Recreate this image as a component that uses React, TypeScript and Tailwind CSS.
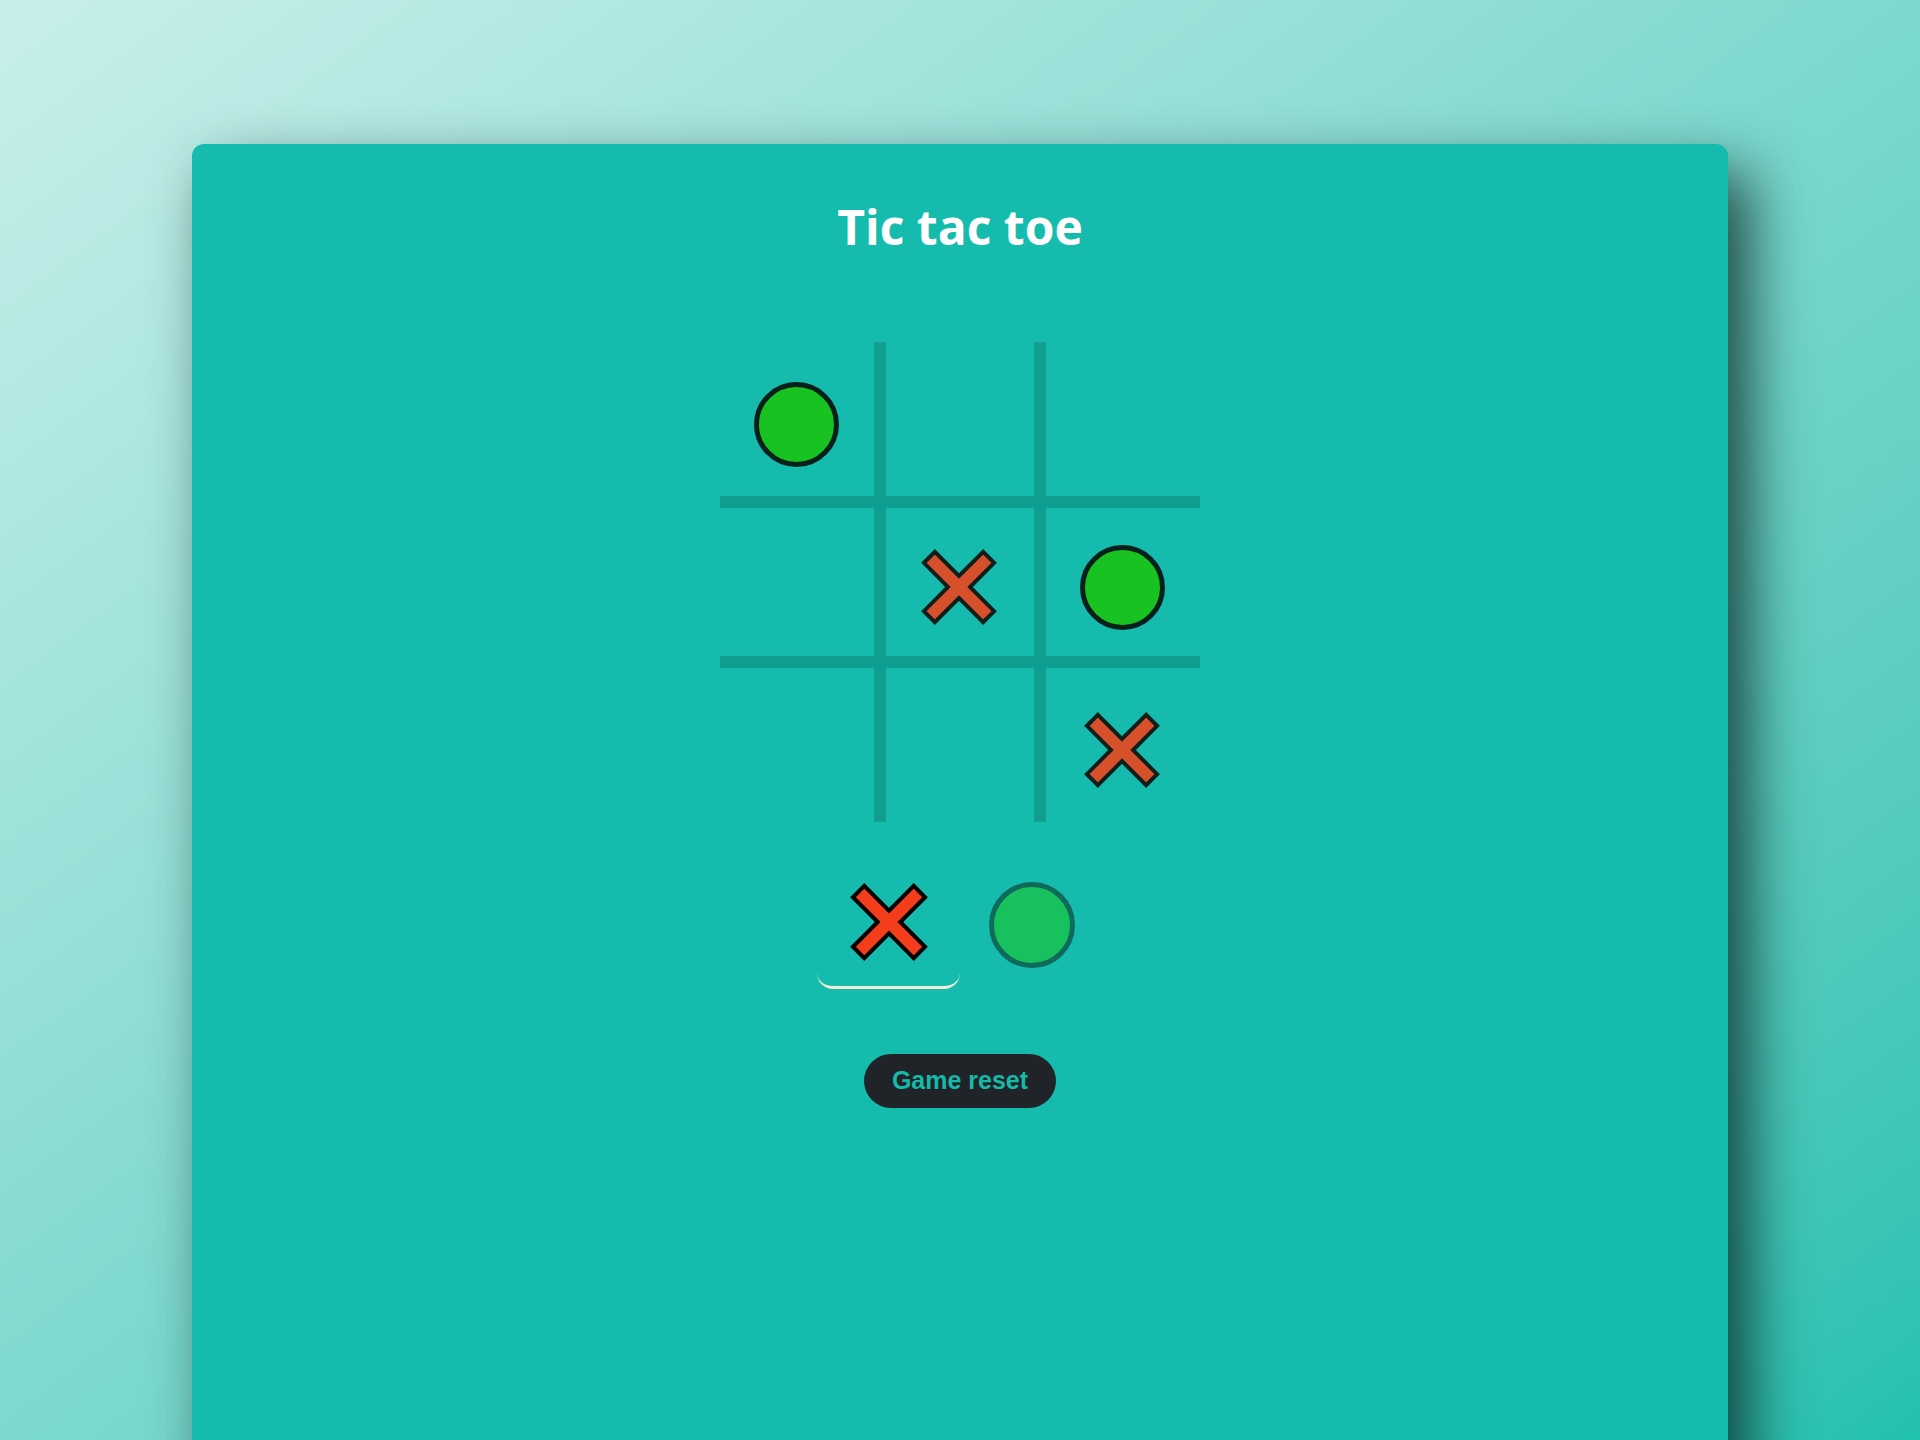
import React from 'react';

type Mark = 'x' | 'o' | null;

const BOARD: Mark[] = ['o', null, null, null, 'x', 'o', null, null, 'x'];

const Cross = ({ size = 78, fill = '#d6502c', stroke = '#0e1f1b' }: { size?: number; fill?: string; stroke?: string }) => (
  <svg width={size} height={size} viewBox="-40 -40 80 80" overflow="visible">
    <g transform="rotate(45)">
      <polygon
        points="8,-43 8,-8 43,-8 43,8 8,8 8,43 -8,43 -8,8 -43,8 -43,-8 -8,-8 -8,-43"
        fill={fill}
        stroke={stroke}
        strokeWidth={4}
        strokeLinejoin="miter"
      />
    </g>
  </svg>
);

const Circle = ({ className }: { className: string }) => <div className={className} />;

export default function App() {
  return (
    <div className="h-[1440px] w-full overflow-hidden bg-gradient-to-br from-[#c8efeb] via-[#7dd9ce] to-[#22c1b0] pt-[144px]">
      {/* Card */}
      <div className="mx-auto flex h-[1400px] w-[1536px] flex-col items-center rounded-[12px] bg-[#15bcad] shadow-[22px_28px_60px_rgba(8,36,32,0.8)]">
        <h1 className="mt-[59px] font-['Open_Sans',sans-serif] text-[48px] leading-none font-bold text-white">
          Tic tac toe
        </h1>

        {/* Board */}
        <div className="mt-[91px] grid grid-cols-[154px_148px_154px] grid-rows-[154px_148px_154px] gap-[12px] bg-[#0f9e8f]">
          {BOARD.map((m, i) => (
            <div key={i} className="flex items-center justify-center bg-[#15bcad] pt-[10px] pr-[2px]">
              {m === 'o' && (
                <Circle className="h-[85px] w-[85px] rounded-full border-[5px] border-[#08201b] bg-[#18c221]" />
              )}
              {m === 'x' && <Cross />}
            </div>
          ))}
        </div>

        {/* Turn indicator */}
        <div className="mt-[40px] flex">
          <div className="flex h-[127px] w-[143px] items-center justify-center rounded-b-[16px] border-b-[3px] border-[#f1ecd9] pb-[4px]">
            <Cross size={80} fill="#f43d1b" stroke="#000000" />
          </div>
          <div className="flex h-[127px] w-[143px] items-center justify-center pb-[1px]">
            <Circle className="h-[86px] w-[86px] rounded-full border-[5px] border-[#0f6a5b] bg-[#17c15d]" />
          </div>
        </div>

        <button className="mt-[65px] h-[54px] w-[192px] rounded-full bg-[#202327] font-['Liberation_Sans',Arial,sans-serif] text-[25px] font-bold text-[#16b9a8]">
          Game reset
        </button>
      </div>
    </div>
  );
}
